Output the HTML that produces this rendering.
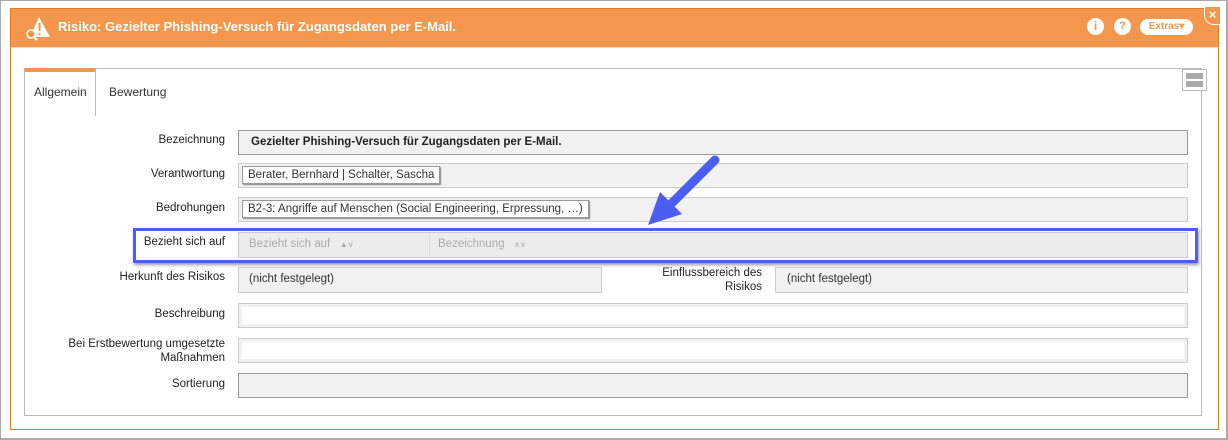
<!DOCTYPE html>
<html><head><meta charset="utf-8"><style>
*{box-sizing:border-box;margin:0;padding:0}
body{width:1228px;height:440px;background:#fff;font-family:"Liberation Sans",sans-serif;font-size:11.5px;color:#333;position:relative;overflow:hidden}
.abs{position:absolute}
.outer{left:0;top:0;width:1228px;height:440px;border:1px solid #aaa;border-bottom-width:2px;border-right-width:2px}
.dlg{left:10px;top:8px;width:1209px;height:422px;border:1px solid #e07b2a;background:#fff}
.hdr{left:11px;top:9px;width:1207px;height:39px;background:#f4964c;border-bottom:1px solid #ddd}
.ttl{left:58px;top:19px;color:#fff;font-weight:bold;font-size:13px}
.panel{left:24px;top:68px;width:1178px;height:348px;border:1px solid #bbb}
.tab{left:24px;top:68px;width:72px;height:48px;border:1px solid #bbb;border-bottom:none;border-top:4px solid #f4964c;background:#fff}
.lbl{text-align:right;width:210px;left:15px;font-size:11.5px;color:#222}
.in{background:#f1f1f1;border:1px solid #ccc}
.chip{background:#fff;border:1px solid #999;padding:2px 5px;font-size:11.5px;white-space:nowrap;box-shadow:1px 1px 1px #888}
</style></head><body>
<div class="abs outer"></div>
<div class="abs dlg"></div>
<div class="abs hdr"></div>
<svg class="abs" style="left:24px;top:15px" width="28" height="26" viewBox="0 0 28 26"><path d="M15 2 L26 22 L6 22 Z" fill="#fff"/><rect x="14.5" y="8" width="2" height="8" fill="#f4964c"/><rect x="14.5" y="18" width="2" height="2" fill="#f4964c"/><circle cx="7" cy="19" r="4" fill="#f4964c" stroke="#fff" stroke-width="1.5"/><path d="M10 22 L13 25" stroke="#fff" stroke-width="2"/></svg>
<div class="abs ttl">Risiko: Gezielter Phishing-Versuch für Zugangsdaten per E-Mail.</div>
<div class="abs" style="left:1087px;top:18px;width:17px;height:17px;border-radius:50%;background:#fff;color:#f4964c;font-weight:bold;font-size:12px;text-align:center;line-height:17px">i</div>
<div class="abs" style="left:1114px;top:18px;width:17px;height:17px;border-radius:50%;background:#fff;color:#f4964c;font-weight:bold;font-size:11px;text-align:center;line-height:17px">?</div>
<div class="abs" style="left:1140px;top:19px;width:53px;height:16px;border-radius:8px;background:#fff;color:#f4964c;font-weight:bold;font-size:10px;text-align:center;line-height:16px">Extras▾</div>
<div class="abs" style="left:1204px;top:7px;width:16px;height:18px;background:#f4964c;border-left:1px solid #fff;border-bottom:1px solid #fff;border-bottom-left-radius:10px;color:#fff;font-size:13px;font-weight:bold;text-align:center;line-height:15px">×</div>
<div class="abs panel"></div>
<div class="abs tab"></div>
<div class="abs" style="left:34px;top:85px;font-size:12px">Allgemein</div>
<div class="abs" style="left:109px;top:85px;font-size:12px">Bewertung</div>
<div class="abs" style="left:1182px;top:69px;width:25px;height:22px;border:1px solid #bbb;background:#fff"><div style="margin:3px 3px 0;height:6px;background:#aaa"></div><div style="margin:2px 3px 0;height:6px;background:#aaa"></div></div>

<div class="abs lbl" style="top:134px">Bezeichnung</div>
<div class="abs in" style="left:238px;top:130px;width:950px;height:25px;border-color:#999"></div>
<div class="abs" style="left:251px;top:136px;font-weight:bold;color:#222">Gezielter Phishing-Versuch für Zugangsdaten per E-Mail.</div>

<div class="abs lbl" style="top:168px">Verantwortung</div>
<div class="abs in" style="left:238px;top:163px;width:950px;height:25px"></div>
<div class="abs chip" style="left:242px;top:166px">Berater, Bernhard | Schalter, Sascha</div>

<div class="abs lbl" style="top:202px">Bedrohungen</div>
<div class="abs in" style="left:238px;top:197px;width:950px;height:25px"></div>
<div class="abs chip" style="left:242px;top:200px">B2-3: Angriffe auf Menschen (Social Engineering, Erpressung, …)</div>

<div class="abs" style="left:133px;top:228px;width:1065px;height:35px;border:3px solid #4a5ff0;box-shadow:1px 2px 3px #999"></div>
<div class="abs lbl" style="top:236px;left:15px;width:210px">Bezieht sich auf</div>
<div class="abs in" style="left:238px;top:232px;width:950px;height:26px;background:#ececec"></div>
<div class="abs" style="left:429px;top:233px;width:1px;height:24px;background:#ddd"></div>
<div class="abs" style="left:249px;top:238px;color:#aaa">Bezieht sich auf &nbsp;&nbsp;<span style="font-size:8px">▲∨</span></div>
<div class="abs" style="left:438px;top:238px;color:#aaa">Bezeichnung &nbsp;&nbsp;<span style="font-size:8px">∧∨</span></div>

<svg class="abs" style="left:640px;top:150px" width="90" height="80"><path d="M75 10 L30 55" stroke="#4a5ff0" stroke-width="9" stroke-linecap="round"/><path d="M8 75 L20 42 L42 64 Z" fill="#4a5ff0"/></svg>

<div class="abs lbl" style="top:271px">Herkunft des Risikos</div>
<div class="abs in" style="left:238px;top:267px;width:364px;height:26px"></div>
<div class="abs" style="left:249px;top:273px">(nicht festgelegt)</div>
<div class="abs" style="left:600px;width:162px;text-align:right;top:266px;line-height:14px;color:#222">Einflussbereich des<br>Risikos</div>
<div class="abs in" style="left:775px;top:267px;width:413px;height:26px"></div>
<div class="abs" style="left:787px;top:273px">(nicht festgelegt)</div>

<div class="abs lbl" style="top:308px">Beschreibung</div>
<div class="abs in" style="left:238px;top:303px;width:950px;height:25px;padding:3px"><div style="background:#fff;height:100%"></div></div>
<div class="abs lbl" style="top:337px;line-height:14px">Bei Erstbewertung umgesetzte<br>Maßnahmen</div>
<div class="abs in" style="left:238px;top:338px;width:950px;height:25px;padding:3px"><div style="background:#fff;height:100%"></div></div>
<div class="abs lbl" style="top:378px">Sortierung</div>
<div class="abs in" style="left:238px;top:373px;width:950px;height:25px;border-color:#999"></div>
</body></html>
